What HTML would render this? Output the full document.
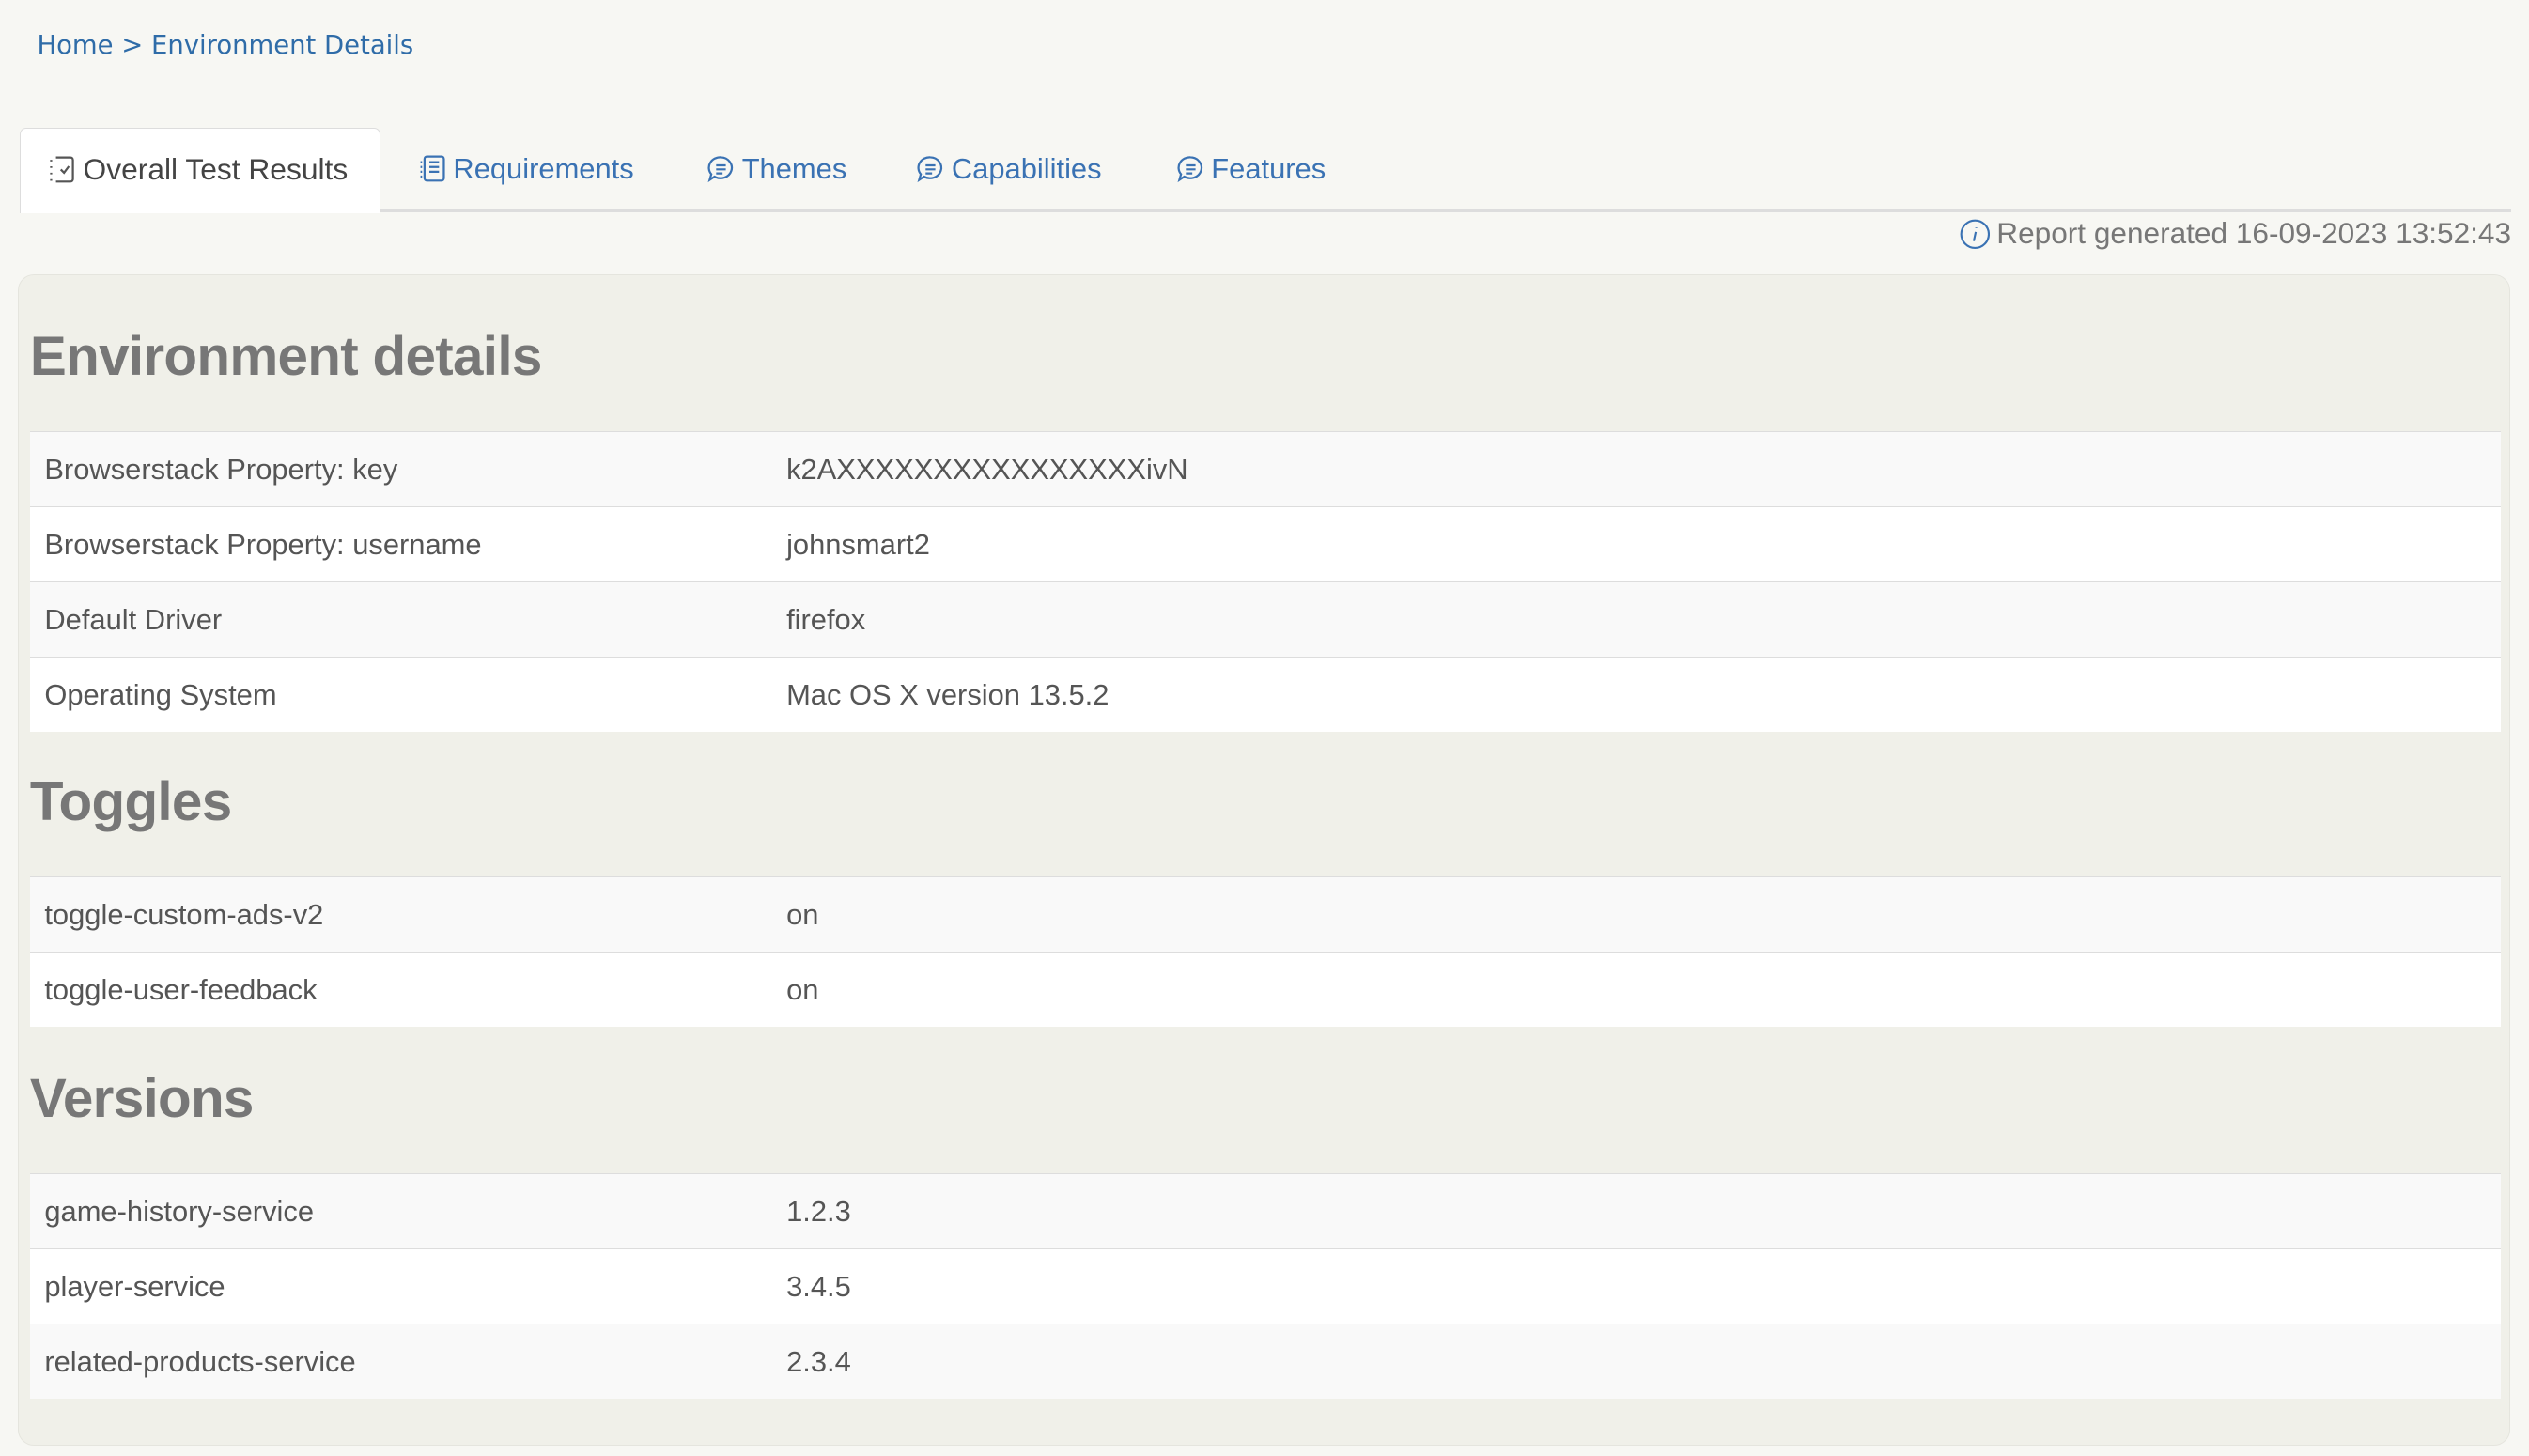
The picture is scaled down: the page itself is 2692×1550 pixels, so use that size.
<!DOCTYPE html>
<html><head><meta charset="utf-8"><style>
html,body{margin:0;padding:0;background:#f7f7f3;}
body{width:2692px;height:1550px;overflow:hidden;}
#w{zoom:1.7168;width:1568px;height:903px;position:relative;font-family:"Liberation Sans",Arial,sans-serif;color:#555;}
.bc{position:absolute;left:23px;top:19px;font-family:"DejaVu Sans",Verdana,sans-serif;font-size:16px;color:#2f6ca8;}
.tabs{position:absolute;left:12px;top:79px;right:11px;height:51px;border-bottom:2px solid #ddd;}
.tab{position:absolute;top:0;height:51px;line-height:51px;font-size:18px;color:#3a72b3;white-space:nowrap;}
.tab svg{vertical-align:-3px;margin-right:4px}
.act{background:#fff;border:1px solid #ddd;border-bottom:none;border-radius:4px 4px 0 0;color:#444;height:53px;font-size:18.5px;}
.rep{position:absolute;right:11px;top:134px;font-size:18.4px;color:#777;}
.rep svg{vertical-align:-4px;margin-right:4px}
.panel{position:absolute;left:11px;top:170px;width:1544px;height:725px;background:#f0f0e9;border:1px solid #e5e5de;border-radius:10px;}
h2{position:absolute;left:7px;margin:0;font-size:34px;letter-spacing:-0.4px;font-weight:bold;color:#777;}
table{position:absolute;left:7px;width:1532px;border-collapse:collapse;font-size:18px;color:#555;}
td{height:46px;border-top:1px solid #ddd;padding:0 0 0 9px;}
td.v{width:1063px;padding-left:0}
tr:nth-child(odd){background:#f9f9f9}
tr:nth-child(even){background:#fff}
</style></head><body><div id="w">
<div class="bc">Home &gt; Environment Details</div>
<div class="tabs">
<div class="tab act" style="left:0;width:224px;padding-left:17px;box-sizing:border-box;"><svg width="18" height="18" viewBox="0 0 18 18" fill="none" stroke="#555" stroke-width="1.3"><path d="M5 1.5h9a1.5 1.5 0 0 1 1.5 1.5v12a1.5 1.5 0 0 1-1.5 1.5H5"/><path d="M2 3v1M2 7v1M2 11v1M2 15v1" /><path d="M8 9l2 2 3-4"/></svg>Overall Test Results</div>
<div class="tab" style="left:247px"><svg width="18" height="18" viewBox="0 0 18 18" fill="none" stroke="#3a72b3" stroke-width="1.3"><rect x="4" y="1.5" width="12" height="15" rx="1.5"/><path d="M7 5h6M7 8h6M7 11h6M1.5 5h1M1.5 8h1M1.5 11h1M1.5 14h1"/></svg>Requirements</div>
<div class="tab" style="left:426px"><svg width="18" height="18" viewBox="0 0 18 18" fill="none" stroke="#3a72b3" stroke-width="1.3"><path d="M9 2a7 6.5 0 1 1-4 12l-3 2 1-3.5A7 6.5 0 0 1 9 2z"/><path d="M6 7h6M6 9.5h6M6 12h4"/></svg>Themes</div>
<div class="tab" style="left:556px"><svg width="18" height="18" viewBox="0 0 18 18" fill="none" stroke="#3a72b3" stroke-width="1.3"><path d="M9 2a7 6.5 0 1 1-4 12l-3 2 1-3.5A7 6.5 0 0 1 9 2z"/><path d="M6 7h6M6 9.5h6M6 12h4"/></svg>Capabilities</div>
<div class="tab" style="left:717px"><svg width="18" height="18" viewBox="0 0 18 18" fill="none" stroke="#3a72b3" stroke-width="1.3"><path d="M9 2a7 6.5 0 1 1-4 12l-3 2 1-3.5A7 6.5 0 0 1 9 2z"/><path d="M6 7h6M6 9.5h6M6 12h4"/></svg>Features</div>
</div>
<div class="rep"><svg width="19" height="19" viewBox="0 0 20 20" fill="none" stroke="#3a72b3" stroke-width="1.3"><circle cx="10" cy="10" r="9"/><path d="M10.5 8.5l-1.3 6M10.8 5.5v.5"/></svg>Report generated 16-09-2023 13:52:43</div>
<div class="panel">
<h2 style="top:31px">Environment details</h2>
<table style="top:97px">
<tr><td>Browserstack Property: key</td><td class="v">k2AXXXXXXXXXXXXXXXXivN</td></tr>
<tr><td>Browserstack Property: username</td><td class="v">johnsmart2</td></tr>
<tr><td>Default Driver</td><td class="v">firefox</td></tr>
<tr><td>Operating System</td><td class="v">Mac OS X version 13.5.2</td></tr>
</table>
<h2 style="top:307px">Toggles</h2>
<table style="top:373px">
<tr><td>toggle-custom-ads-v2</td><td class="v">on</td></tr>
<tr><td>toggle-user-feedback</td><td class="v">on</td></tr>
</table>
<h2 style="top:491px">Versions</h2>
<table style="top:557px">
<tr><td>game-history-service</td><td class="v">1.2.3</td></tr>
<tr><td>player-service</td><td class="v">3.4.5</td></tr>
<tr><td>related-products-service</td><td class="v">2.3.4</td></tr>
</table>
</div>
</div></body></html>
